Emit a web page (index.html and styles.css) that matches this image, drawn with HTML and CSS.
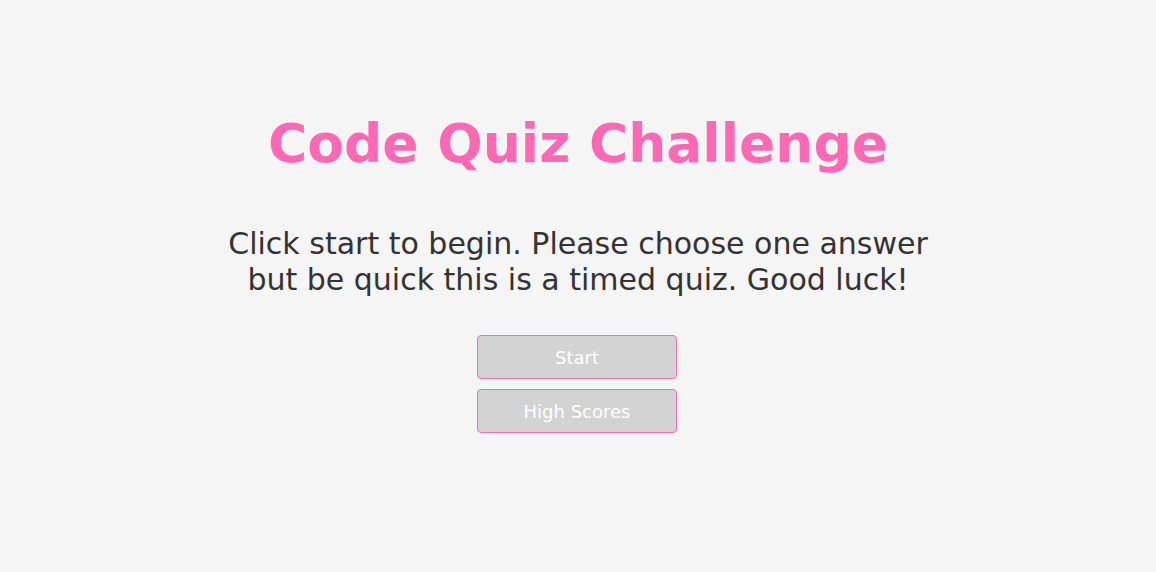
FILE: index.html
```html
<!DOCTYPE html>
<html lang="en">
<head>
<meta charset="utf-8">
<title>Code Quiz Challenge</title>
<link rel="stylesheet" href="styles.css">
</head>
<body>
<main class="intro">
  <h1 class="title">Code Quiz Challenge</h1>
  <p class="lead">Click start to begin. Please choose one answer<br>but be quick this is a timed quiz. Good luck!</p>
  <div class="actions">
    <button class="btn" type="button">Start</button>
    <button class="btn" type="button">High Scores</button>
  </div>
</main>
</body>
</html>
```
FILE: styles.css
```css
html, body {
  margin: 0;
  padding: 0;
  background: #f5f5f5;
  font-family: "DejaVu Sans", Verdana, sans-serif;
  color: #333;
}
.intro {
  display: flex;
  flex-direction: column;
  align-items: center;
  padding-top: 108px;
}
.title {
  margin: 0;
  font-size: 53.5px;
  font-weight: bold;
  color: #ff69b4;
  line-height: 72px;
}
.lead {
  margin: 46px 0 0;
  font-size: 30px;
  line-height: 36px;
  text-align: center;
}
.actions {
  margin-top: 37px;
  margin-right: 2px;
  display: flex;
  flex-direction: column;
  gap: 10px;
}
.btn {
  width: 200px;
  height: 44px;
  background: #d3d3d3;
  border: 1px solid #ff69b4;
  border-radius: 4px;
  color: #fff;
  font-family: "DejaVu Sans", Verdana, sans-serif;
  font-size: 18px;
}
```
